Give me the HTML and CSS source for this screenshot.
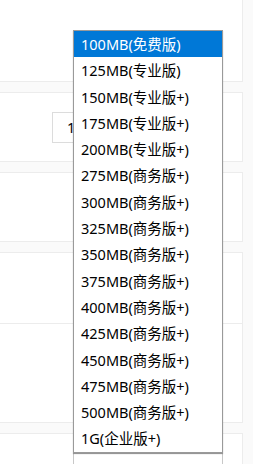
FILE: index.html
```html
<!DOCTYPE html>
<html lang="zh-CN">
<head>
    <meta charset="UTF-8">
    <meta name="viewport" content="width=device-width, initial-scale=1.0">
    <title>空间容量选择</title>
    <link rel="stylesheet" href="styles.css">
</head>
<body>
    <div class="page">
        <div class="panel panel-top"></div>

        <div class="panel panel-mid">
            <div class="field">
                <div class="select-box">100MB(免费版)</div>
            </div>
        </div>

        <div class="panel panel-mid"></div>

        <div class="panel panel-big">
            <div class="row row-first"></div>
            <div class="row"></div>
        </div>

        <div class="panel panel-last">
            <div class="select-box select-bottom">100MB(免费版)</div>
        </div>
    </div>

    <ul class="dropdown">
        <li class="active">100MB(免费版)</li>
        <li>125MB(专业版)</li>
        <li>150MB(专业版+)</li>
        <li>175MB(专业版+)</li>
        <li>200MB(专业版+)</li>
        <li>275MB(商务版+)</li>
        <li>300MB(商务版+)</li>
        <li>325MB(商务版+)</li>
        <li>350MB(商务版+)</li>
        <li>375MB(商务版+)</li>
        <li>400MB(商务版+)</li>
        <li>425MB(商务版+)</li>
        <li>450MB(商务版+)</li>
        <li>475MB(商务版+)</li>
        <li>500MB(商务版+)</li>
        <li>1G(企业版+)</li>
    </ul>
</body>
</html>
```

FILE: styles.css
```css
body {
    margin: 0;
    background: #fafafa;
    font-family: "Noto Sans", "Noto Sans CJK SC", sans-serif;
    font-size: 14.5px;
    color: #000;
    height: 464px;
    overflow: hidden;
}
.page {
    width: 243px;
    display: flex;
    flex-direction: column;
    gap: 10px;
}
.panel {
    background: #fff;
    border: 1px solid #ececec;
    border-left: none;
    box-sizing: border-box;
}
.panel-top {
    height: 82px;
    border-top: none;
}
.panel-mid {
    height: 70px;
}
.field {
    padding: 19px 0 0 52px;
}
.select-box {
    width: 160px;
    height: 31px;
    border: 1px solid #dcdcdc;
    box-sizing: border-box;
    line-height: 29px;
    padding-left: 14px;
    white-space: nowrap;
    overflow: hidden;
}
.panel-big {
    height: 171px;
}
.row {
    height: 70px;
}
.row-first {
    border-bottom: 1px solid #ececec;
}
.panel-last {
    height: 40px;
    border-bottom: none;
    padding: 19px 0 0 73px;
}
.select-bottom {
    width: 150px;
    padding-left: 7px;
    border-color: #c8c8c8;
    line-height: 20px;
    padding-top: 8px;
}
.dropdown {
    position: absolute;
    left: 73px;
    top: 30px;
    width: 150px;
    margin: 0;
    padding: 0;
    list-style: none;
    background: #fff;
    border: 1px solid #9a9a9a;
    box-sizing: border-box;
    box-shadow: 0 1px 1px rgba(0,0,0,0.25);
}
.dropdown li {
    height: 26.3px;
    line-height: 26.3px;
    padding-left: 7px;
    white-space: nowrap;
}
.dropdown .active {
    background: #0078d7;
    color: #fff;
}
```
